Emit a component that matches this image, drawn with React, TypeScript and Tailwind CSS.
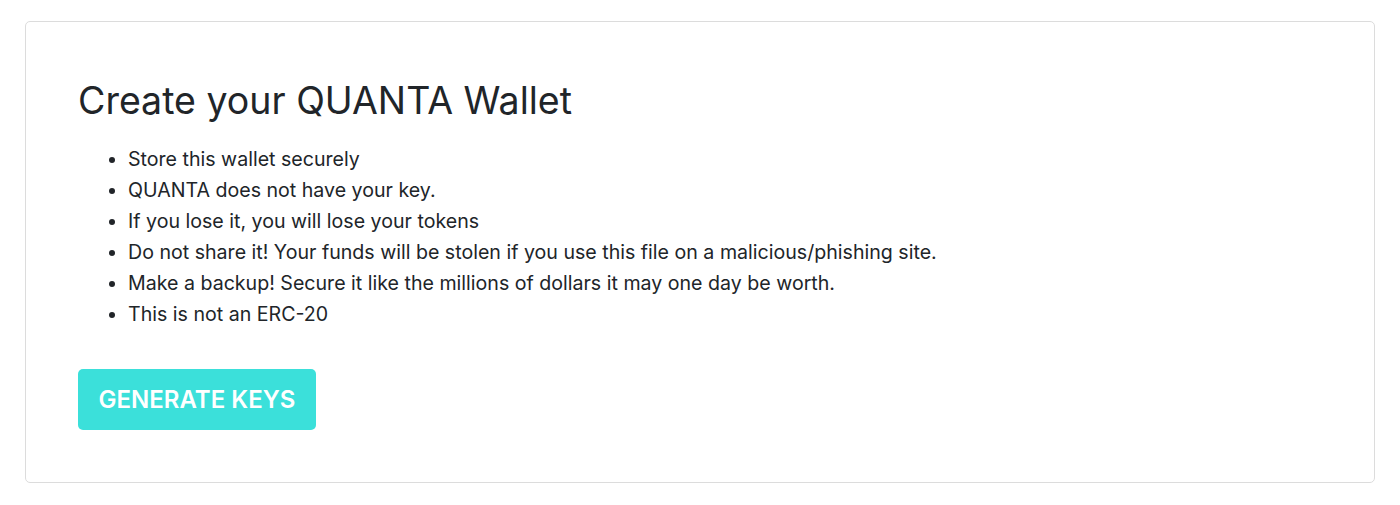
import React from "react";

const points = [
  "Store this wallet securely",
  "QUANTA does not have your key.",
  "If you lose it, you will lose your tokens",
  "Do not share it! Your funds will be stolen if you use this file on a malicious/phishing site.",
  "Make a backup! Secure it like the millions of dollars it may one day be worth.",
  "This is not an ERC-20",
];

export default function App() {
  return (
    <div className="min-h-screen bg-white px-[25px] pt-[21px] font-['Inter',sans-serif] text-[#212529]">
      <div className="h-[462px] rounded-[5px] border border-[#dcdcdc] pl-[52px] pt-[55px]">
        <h1 className="text-[37.5px] font-normal leading-[48px]">Create your QUANTA Wallet</h1>
        <ul className="mt-[19px] list-disc pl-[50px] text-[19.6px] leading-[31px]">
          {points.map((p) => (
            <li key={p}>{p}</li>
          ))}
        </ul>
        <button className="mt-[39px] h-[61px] w-[238px] rounded-[5px] bg-[#3be0da] text-[24px] font-semibold text-white">
          GENERATE KEYS
        </button>
      </div>
    </div>
  );
}
